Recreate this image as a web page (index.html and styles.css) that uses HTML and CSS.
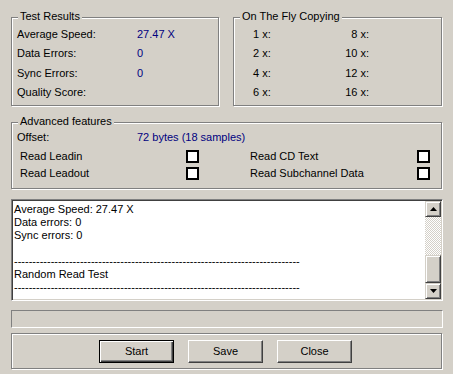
FILE: index.html
```html
<!DOCTYPE html>
<html>
<head>
<meta charset="utf-8">
<link rel="stylesheet" href="styles.css">
</head>
<body>
<div class="dialog">
  <div class="top-row">
    <div class="group group-results">
      <span class="group-title">Test Results</span>
      <div class="results-grid">
        <span>Average Speed:</span><span class="val">27.47 X</span>
        <span>Data Errors:</span><span class="val">0</span>
        <span>Sync Errors:</span><span class="val">0</span>
        <span>Quality Score:</span><span class="val"></span>
      </div>
    </div>
    <div class="group group-fly">
      <span class="group-title">On The Fly Copying</span>
      <div class="fly-grid">
        <span>1 x:</span><span class="r">8 x:</span>
        <span>2 x:</span><span class="r">10 x:</span>
        <span>4 x:</span><span class="r">12 x:</span>
        <span>6 x:</span><span class="r">16 x:</span>
      </div>
    </div>
  </div>
  <div class="group group-adv">
    <span class="group-title">Advanced features</span>
    <div class="offset-row"><span class="offset-label">Offset:</span><span class="val">72 bytes (18 samples)</span></div>
    <div class="adv-grid">
      <span>Read Leadin</span><span class="check"></span><span></span><span>Read CD Text</span><span class="check"></span>
      <span>Read Leadout</span><span class="check"></span><span></span><span>Read Subchannel Data</span><span class="check"></span>
    </div>
  </div>
  <div class="log">
    <div class="log-text">
      <div>Average Speed: 27.47 X</div>
      <div>Data errors: 0</div>
      <div>Sync errors: 0</div>
      <div>&nbsp;</div>
      <div>------------------------------------------------------------------------------</div>
      <div>Random Read Test</div>
      <div>------------------------------------------------------------------------------</div>
    </div>
    <div class="scrollbar">
      <div class="sb-btn"><svg width="7" height="4" viewBox="0 0 7 4"><path d="M3.5 0 L7 4 L0 4 Z" fill="#000"/></svg></div>
      <div class="sb-track"></div>
      <div class="sb-thumb"></div>
      <div class="sb-btn"><svg width="7" height="4" viewBox="0 0 7 4"><path d="M0 0 L7 0 L3.5 4 Z" fill="#000"/></svg></div>
    </div>
  </div>
  <div class="progress"></div>
  <div class="button-panel">
    <button class="btn btn-default">Start</button>
    <button class="btn">Save</button>
    <button class="btn">Close</button>
  </div>
</div>
</body>
</html>
```

FILE: styles.css
```css
html, body {
  margin: 0;
  padding: 0;
  background: #d4d0c8;
}
body {
  font-family: "Liberation Sans", Arial, sans-serif;
  font-size: 11px;
  color: #000;
  width: 453px;
  height: 374px;
  overflow: hidden;
}
.dialog {
  padding: 17px 10px 0 11px;
  display: flex;
  flex-direction: column;
}
.top-row {
  display: flex;
  gap: 14px;
}
.group {
  position: relative;
  border: 1px solid #808080;
  box-shadow: inset 1px 1px 0 #fff, 1px 1px 0 #fff;
  box-sizing: border-box;
}
.group-title {
  position: absolute;
  top: -8px;
  left: 6px;
  padding: 0 2px;
  line-height: 13px;
  background: #d4d0c8;
}
.group-results {
  width: 208px;
  height: 89px;
}
.group-fly {
  width: 209px;
  height: 89px;
}
.results-grid {
  display: grid;
  grid-template-columns: 120px 1fr;
  grid-auto-rows: 19.3px;
  align-items: center;
  padding: 7px 0 0 5px;
  line-height: 13px;
}
.val {
  color: #000080;
}
.fly-grid {
  display: grid;
  grid-template-columns: 60px 56px;
  grid-auto-rows: 19.3px;
  align-items: center;
  padding: 7px 0 0 19px;
  line-height: 13px;
}
.fly-grid .r {
  text-align: right;
}
.group-adv {
  margin-top: 16px;
  width: 431px;
  height: 67px;
  padding: 8px 0 0 5px;
}
.offset-row {
  display: flex;
  line-height: 13px;
}
.offset-label {
  width: 120px;
}
.adv-grid {
  display: grid;
  grid-template-columns: 166px 13px 51px 167px 13px;
  grid-auto-rows: 17px;
  align-items: center;
  margin: 4px 0 0 3px;
  line-height: 13px;
}
.check {
  width: 13px;
  height: 13px;
  box-sizing: border-box;
  border: 2px solid #000;
  background: #fff;
}
.log {
  margin-top: 10px;
  width: 432px;
  height: 102px;
  box-sizing: border-box;
  border-top: 1px solid #808080;
  border-left: 1px solid #808080;
  border-right: 1px solid #fff;
  border-bottom: 1px solid #fff;
  display: flex;
  background: #fff;
  box-shadow: inset 1px 1px 0 #404040, inset -1px -1px 0 #d4d0c8;
}
.log-text {
  flex: 1;
  padding: 3px 0 0 2px;
  line-height: 13px;
  overflow: hidden;
  white-space: nowrap;
}
.scrollbar {
  width: 16px;
  margin: 1px 1px 1px 0;
  display: flex;
  flex-direction: column;
}
.sb-btn, .sb-thumb {
  background: #d4d0c8;
  box-sizing: border-box;
  border-top: 1px solid #d4d0c8;
  border-left: 1px solid #d4d0c8;
  border-right: 1px solid #404040;
  border-bottom: 1px solid #404040;
  box-shadow: inset 1px 1px 0 #fff, inset -1px -1px 0 #808080;
}
.sb-btn {
  height: 16px;
  display: flex;
  align-items: center;
  justify-content: center;
}
.sb-btn svg {
  display: block;
}
.sb-track {
  height: 38px;
  background: repeating-conic-gradient(#fff 0 25%, #d4d0c8 0 50%) 0 0 / 2px 2px;
}
.sb-thumb {
  flex: 1;
}
.progress {
  margin-top: 9px;
  width: 432px;
  height: 18px;
  box-sizing: border-box;
  border-top: 1px solid #808080;
  border-left: 1px solid #808080;
  border-right: 1px solid #fff;
  border-bottom: 1px solid #fff;
}
.button-panel {
  margin-top: 5px;
  width: 431px;
  height: 36px;
  box-sizing: border-box;
  border: 1px solid #808080;
  box-shadow: inset 1px 1px 0 #fff, 1px 1px 0 #fff;
  display: flex;
  gap: 14px;
  padding: 6px 0 0 87px;
}
.btn {
  width: 75px;
  height: 23px;
  box-sizing: border-box;
  font-family: "Liberation Sans", Arial, sans-serif;
  font-size: 11px;
  color: #000;
  background: #d4d0c8;
  border-top: 1px solid #fff;
  border-left: 1px solid #fff;
  border-right: 1px solid #404040;
  border-bottom: 1px solid #404040;
  box-shadow: inset -1px -1px 0 #808080;
  padding: 0;
  line-height: 13px;
}
.btn-default {
  border: 1px solid #000;
  box-shadow: inset 1px 1px 0 #fff, inset -1px -1px 0 #404040, inset -2px -2px 0 #808080;
}
```
